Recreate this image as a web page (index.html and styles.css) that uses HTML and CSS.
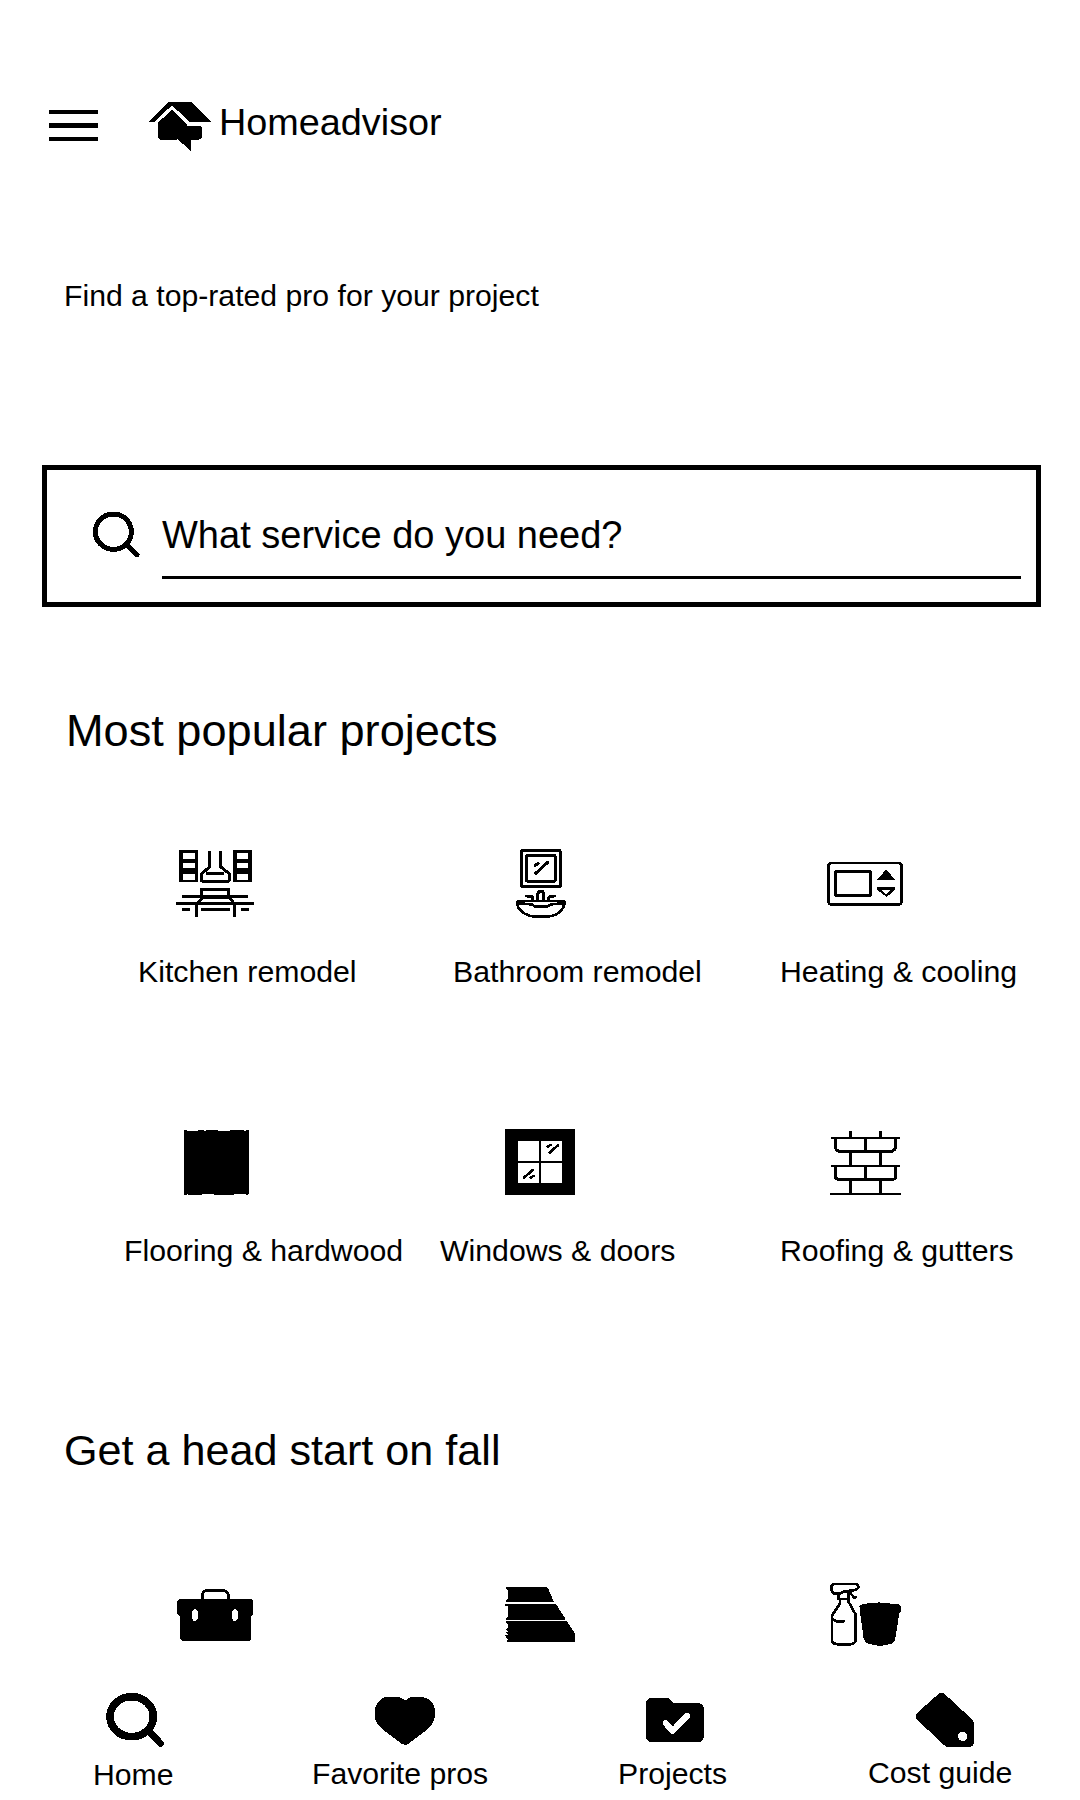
FILE: index.html
```html
<!DOCTYPE html>
<html lang="en">
<head>
<meta charset="utf-8">
<title>Homeadvisor</title>
<link rel="stylesheet" href="styles.css">
</head>
<body>
<header class="header">
  <button class="menu" aria-label="Menu"><span></span><span></span><span></span></button>
  <svg class="logo" viewBox="345 60 210 156" width="70" height="52"><path d="M357 126L411 69L417 66H484L543 126H479L426 76L372 126Z"/><path d="M384 128L426 89L473 137H510L516 142V170Q514 179 502 180H483V213L443 178L434 180H394Q385 178 384 170Z"/></svg>
  <h1 class="brand">Homeadvisor</h1>
</header>
<p class="tagline">Find a top-rated pro for your project</p>
<div class="search">
  <svg viewBox="180 180 156 150" width="52" height="50"><g class="line"><ellipse cx="250" cy="245" rx="54" ry="53" stroke-width="15"/><path d="M290 284L321 314" stroke-width="15"/></g></svg>
  <div class="field">What service do you need?</div>
</div>
<h2 class="title popular">Most popular projects</h2>
<section class="tiles first">
  <div class="tile kitchen">
    <svg viewBox="0 0 330 300" width="110" height="100"><path d="M57 60H113V157H57ZM70 69V88H104V69ZM70 100V115H104V100ZM70 131V149H104V131ZM220 60H275V157H220ZM231 69V88H264V69ZM231 100V115H264V100ZM231 131V149H264V131Z" fill-rule="evenodd"/><g class="line butt" stroke-width="9"><path d="M149 62V110L125 132V153H207V130L181 110V62M139 130H191M125 200V177H206V200M67 199H264M49 220H282M66 237H90M243 237H267M123 237H209"/><path d="M109 261V224L128 203H209L223 222V261"/></g></svg>
    <span>Kitchen remodel</span>
  </div>
  <div class="tile bathroom">
    <svg viewBox="0 0 270 300" width="90" height="100"><g class="line"><path d="M65 62H180V169H65Z" stroke-width="9"/><path d="M80 77H165V153H80Z" stroke-width="9"/><path d="M183 119V169" stroke-width="8"/><path d="M107 130L143 97M105 106L115 101" stroke-width="9"/><path d="M80 198H96V210M113 210V192Q114 184 123 184Q131 184 131 192V210M146 210V204L151 198H163" stroke-width="9"/><path d="M57 213H190Q195 213 194 220Q187 250 155 258Q123 263 91 258Q57 248 51 221Q50 213 57 213ZM55 220L94 223L107 230H139L153 223L189 220" stroke-width="8"/></g></svg>
    <span>Bathroom remodel</span>
  </div>
  <div class="tile heating">
    <svg viewBox="0 -30 330 300" width="110" height="100"><g class="line"><rect x="55" y="69" width="220" height="125" rx="10" stroke-width="8"/><rect x="76" y="94" width="106" height="73" rx="4" stroke-width="8"/></g><path d="M228 89L256 119H201ZM201 141H256V149L230 171L201 149ZM215 150L229 163L240 150Z" fill-rule="evenodd"/></svg>
    <span>Heating &amp; cooling</span>
  </div>
</section>
<section class="tiles second">
  <div class="tile flooring">
    <svg viewBox="0 0 300 270" width="100" height="90"><path d="M42 45H51V48H84V45H102V48H108V45H144V48H180V45H222V48H228V45H237V237H234V240H228V237H192V240H132V237H96V240H54V237H51V240H42Z"/></svg>
    <span>Flooring &amp; hardwood</span>
  </div>
  <div class="tile windows">
    <svg viewBox="0 0 300 270" width="100" height="90"><path d="M45 42H255V240H45ZM84 78V138H147V78ZM153 78V138H216V78ZM84 144V204H147V144ZM153 144V204H216V144Z" fill-rule="evenodd"/><g class="line"><path d="M179 113L205 90M173 95L181 90M102 188L128 165M122 188L130 183" stroke-width="8"/><path d="M83 78V204" stroke-width="3" stroke-dasharray="4 5"/></g></svg>
    <span>Windows &amp; doors</span>
  </div>
  <div class="tile roofing">
    <svg viewBox="0 0 300 270" width="100" height="90"><g class="line butt"><path d="M48 67.5H255M48 152.5H255M45 237.5H258" stroke-width="6"/><path d="M106.500 48V67M196.500 48V67M106.500 110V150M196.500 110V150M151.500 68V108M151.500 155V193M106.500 195V237M196.500 195V237" stroke-width="9"/><path d="M61 70V98Q62 104 72 110H230Q240 104 242 98V70M61 155V185Q63 193 71 193H232Q241 193 242 185V155" stroke-width="9"/></g></svg>
    <span>Roofing &amp; gutters</span>
  </div>
</section>
<h2 class="title fall">Get a head start on fall</h2>
<section class="seasonal">
  <svg viewBox="0 0 330 270" width="110" height="90"><path d="M57 87H273L279 93V133L273 138V207L267 213H66L60 207V138L51 132V93ZM105 117Q96 119 96 128V143Q97 153 105 153Q113 152 114 143V128Q113 118 105 117ZM225 117Q216 119 216 128V143Q217 153 225 153Q233 152 235 143V128Q233 118 225 117Z" fill-rule="evenodd"/><path class="line" d="M127 88V74Q130 61 146 61H188Q203 62 206 75V88" stroke-width="8"/></svg>
  <svg viewBox="1020 0 240 270" width="80" height="90"><path d="M1038 51H1158L1165 57L1182 96H1039V90L1044 87V60L1038 57ZM1035 102H1188L1214 143V150H1038V144L1044 141V109L1035 107ZM1038 153H1220L1245 190V213L1242 216H1041V210L1044 208L1038 202L1035 195H1044L1038 186H1047L1038 178L1044 174V162L1038 158Z"/></svg>
  <svg viewBox="0 0 330 270" width="110" height="90"><g class="line" stroke-width="8"><path d="M70 42H137Q145 45 145 52Q141 61 122 62L98 66L88 71H74Q65 67 65 59V48ZM86 73V87H116V67M119 67L132 82H137M90 90V100L66 137V214Q71 222 83 223H121Q134 221 136 214V132L116 96V88M66 148L81 154H102"/></g><path d="M148 107L160 101L200 99L207 96L215 99L264 102L273 109V125L268 130L255 210Q251 221 238 223L210 228L178 222L166 216L161 206L151 135Z"/></svg>
</section>
<nav class="nav">
  <a class="home"><svg viewBox="60 30 210 180" width="70" height="60"><g class="line"><ellipse cx="155" cy="110" rx="65" ry="60" stroke-width="23"/><path d="M202 150L241 190" stroke-width="21"/></g></svg><span>Home</span></a>
  <a class="favorite"><svg viewBox="870 30 210 180" width="70" height="60"><path d="M885 87Q891 61 914 52L933 50H955L976 61L995 50H1018L1039 54Q1062 67 1065 88V110Q1061 132 1043 148L984 192L976 195L966 192L907 148Q885 129 885 108Z"/></svg><span>Favorite pros</span></a>
  <a class="projects"><svg viewBox="120 30 210 180" width="70" height="60"><path d="M147 54H204L221 69H295Q312 73 312 89V171Q309 184 297 186H150Q139 182 138 171V64Z"/><path class="line check" d="M197 130L218 152L262 107" stroke-width="18"/></svg><span>Projects</span></a>
  <a class="cost"><svg viewBox="930 30 210 180" width="70" height="60"><path d="M1015 42Q1025 36 1034 42L1115 117L1122 128V188Q1119 200 1108 201H1042L1032 195L951 119Q944 110 951 99ZM1088 155A14 14 0 1 0 1088 183A14 14 0 1 0 1088 155Z" fill-rule="evenodd"/></svg><span>Cost guide</span></a>
</nav>
</body>
</html>
```
FILE: styles.css
```css
* { box-sizing: border-box; }
body {
  margin: 0;
  width: 1080px;
  height: 1800px;
  overflow: hidden;
  background: #fff;
  color: #000;
  font: 30px/40px "Liberation Sans", Arial, sans-serif;
}
h1, h2, p { margin: 0; font-weight: 400; white-space: nowrap; }
svg { display: block; flex: none; shape-rendering: crispEdges; }
span { white-space: nowrap; }
.line { fill: none; stroke: #000; stroke-linecap: round; stroke-linejoin: round; }
.butt { stroke-linecap: butt; }
.check { stroke: #fff; }

.header { display: flex; height: 276px; padding: 100px 0 0 49px; }
.menu {
  display: flex;
  flex-direction: column;
  justify-content: space-between;
  width: 49px;
  height: 31px;
  margin: 10px 47px 0 0;
  padding: 0;
  border: 0;
  background: none;
}
.menu span { height: 4px; background: #000; }
.menu span:nth-child(2) { height: 5px; }
.brand { margin-left: 4px; font-size: 37.8px; line-height: 44px; }

.tagline { height: 189px; padding-left: 64px; font-size: 30.2px; }

.search {
  display: flex;
  width: 999px;
  height: 142px;
  margin-left: 42px;
  padding: 40px 15px 0 43px;
  border: 5px solid #000;
}
.field {
  flex: 1;
  height: 69px;
  margin-left: 20px;
  border-bottom: 3px solid #000;
  font-size: 38px;
  line-height: 50px;
}

.title { line-height: 60px; }
.popular { height: 129px; margin-top: 94px; padding-left: 66px; font-size: 45.15px; }
.fall { height: 149px; padding-left: 64px; font-size: 43.15px; line-height: 59px; }

.tiles { display: grid; grid-template-columns: 315px 340px 300px; padding-left: 122px; }
.first { height: 285px; }
.second { height: 306px; }
.tile { display: flex; flex-direction: column; align-items: flex-start; font-size: 30.25px; }
.first svg { margin-bottom: 22px; }
.second svg { margin-bottom: 26px; }
.kitchen svg { margin-left: 38px; }
.kitchen span { margin-left: 16px; }
.bathroom svg { margin-left: 63px; }
.bathroom span { margin-left: 16px; }
.heating svg { margin-left: 33px; }
.flooring svg { margin-left: 48px; }
.flooring span { margin-left: 2px; }
.windows svg { margin-left: 53px; }
.windows span { margin-left: 3px; }
.roofing svg { margin-left: 38px; }
.heating span, .roofing span { margin-left: 3px; }

.seasonal { display: grid; grid-template-columns: 340px 310px 110px; height: 120px; padding-left: 160px; }

.nav { display: grid; grid-template-columns: 219px 306px 249px 213px; height: 110px; padding-left: 93px; }
.nav a { display: flex; flex-direction: column; align-items: flex-start; }
.home svg { margin-left: 7px; }
.favorite svg { margin-left: 58px; }
.projects svg { margin-left: 22px; }
.cost svg { margin-left: 43px; }
.nav span { margin-top: 4px; font-size: 30.2px; }
.nav .home span { margin-top: 5px; }
.nav .cost span { margin: 3px 0 0 1px; }
```
